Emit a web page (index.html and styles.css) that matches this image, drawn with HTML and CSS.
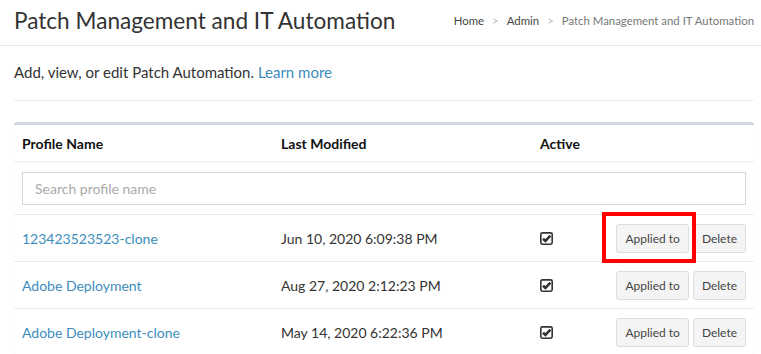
FILE: index.html
```html
<!DOCTYPE html>
<html lang="en">
<head>
    <meta charset="UTF-8">
    <title>Patch Management and IT Automation</title>
    <link rel="stylesheet" href="styles.css">
</head>
<body>
    <div class="content-header">
        <h1>Patch Management and IT Automation</h1>
        <ol class="breadcrumb">
            <li><a href="#">Home</a></li>
            <li><a href="#">Admin</a></li>
            <li class="current">Patch Management and IT Automation</li>
        </ol>
    </div>

    <div class="content">
        <p class="intro">Add, view, or edit Patch Automation. <a href="#">Learn more</a></p>

        <div class="box">
            <div class="row head">
                <div class="cell">Profile Name</div>
                <div class="cell">Last Modified</div>
                <div class="cell">Active</div>
                <div class="cell"></div>
            </div>
            <div class="search-row">
                <input type="text" class="search" placeholder="Search profile name">
            </div>

            <div class="row">
                <div class="cell"><a href="#">123423523523-clone</a></div>
                <div class="cell">Jun 10, 2020 6:09:38 PM</div>
                <div class="cell"><svg class="check" viewBox="0 0 12 12"><rect x="0.75" y="0.75" width="10.5" height="10.5" rx="1.5"/><path d="M2.8 6.2 L5 8.3 L9.6 3.4"/></svg></div>
                <div class="cell actions">
                    <span class="highlight"><button class="btn">Applied to</button></span>
                    <button class="btn">Delete</button>
                </div>
            </div>
            <div class="row">
                <div class="cell"><a href="#">Adobe Deployment</a></div>
                <div class="cell">Aug 27, 2020 2:12:23 PM</div>
                <div class="cell"><svg class="check" viewBox="0 0 12 12"><rect x="0.75" y="0.75" width="10.5" height="10.5" rx="1.5"/><path d="M2.8 6.2 L5 8.3 L9.6 3.4"/></svg></div>
                <div class="cell actions">
                    <button class="btn">Applied to</button>
                    <button class="btn">Delete</button>
                </div>
            </div>
            <div class="row">
                <div class="cell"><a href="#">Adobe Deployment-clone</a></div>
                <div class="cell">May 14, 2020 6:22:36 PM</div>
                <div class="cell"><svg class="check" viewBox="0 0 12 12"><rect x="0.75" y="0.75" width="10.5" height="10.5" rx="1.5"/><path d="M2.8 6.2 L5 8.3 L9.6 3.4"/></svg></div>
                <div class="cell actions">
                    <button class="btn">Applied to</button>
                    <button class="btn">Delete</button>
                </div>
            </div>
        </div>
    </div>
</body>
</html>
```

FILE: styles.css
```css
/* --- General --- */
body {
    margin: 0;
    font-family: 'Lato', 'Liberation Sans', sans-serif;
    color: #333;
    background: #fff;
    font-size: 14px;
}

a {
    color: #3c8dbc;
    text-decoration: none;
}

/* --- Header --- */
.content-header {
    display: flex;
    justify-content: space-between;
    align-items: center;
    height: 46px;
    padding: 0 7px 0 14px;
    border-bottom: 1px solid #e8e8e8;
    box-sizing: border-box;
}

.content-header h1 {
    margin: 0 0 5px;
    font-size: 22.6px;
    font-weight: 400;
    color: #333;
}

.breadcrumb {
    display: flex;
    list-style: none;
    margin: 0 0 5px;
    padding: 0;
    font-size: 11.4px;
}

.breadcrumb li + li::before {
    content: '>';
    color: #bbb;
    padding: 0 8px;
}

.breadcrumb a {
    color: #444;
}

.breadcrumb .current {
    color: #777;
}

/* --- Content --- */
.content {
    padding: 0 7px 0 14px;
}

.intro {
    margin: 0;
    padding: 17px 0 19px;
    font-size: 15px;
    border-bottom: 1px solid #eee;
}

.box {
    margin-top: 21px;
    border-top: 3px solid #d2d6de;
    border-radius: 3px;
    box-shadow: 0 1px 1px rgba(0, 0, 0, 0.1);
    background: #fff;
}

/* --- Table rows --- */
.row {
    display: grid;
    grid-template-columns: 259px 259px 1fr auto;
    align-items: center;
    height: 46px;
    border-top: 1px solid #ebebeb;
    font-size: 14px;
}

.row.head {
    height: 36px;
    border-top: none;
    border-bottom: 2px solid #f4f4f4;
    font-weight: 700;
    color: #111;
}

.cell {
    padding: 0 8px;
}

.search-row {
    padding: 9px 8px;
}

.search {
    display: block;
    width: 100%;
    height: 33px;
    box-sizing: border-box;
    border: 1px solid #d2d6de;
    padding: 0 12px;
    font-family: inherit;
    font-size: 14px;
    color: #555;
}

.search::placeholder {
    color: #aaa;
}

.check {
    width: 13px;
    height: 13px;
    display: block;
    fill: none;
    stroke: #333;
}

.check rect {
    stroke-width: 1.5;
}

.check path {
    stroke-width: 2.4;
}

/* --- Buttons --- */
.actions {
    display: flex;
    gap: 4px;
}

.btn {
    height: 29px;
    padding: 0 8px;
    background: #f4f4f4;
    border: 1px solid #ddd;
    border-radius: 3px;
    font-family: inherit;
    font-size: 12px;
    color: #444;
}

.highlight {
    position: relative;
    display: flex;
}

.highlight::after {
    content: '';
    position: absolute;
    top: -12px;
    bottom: -10px;
    left: -14px;
    right: -7px;
    border: 4px solid #f00;
}
```
